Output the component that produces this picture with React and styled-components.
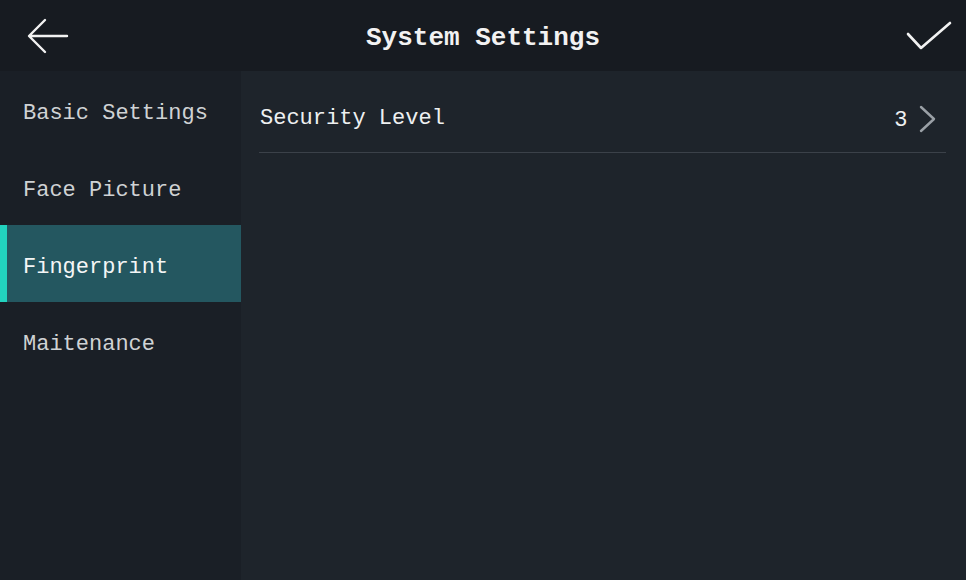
import React from 'react';
import styled, { createGlobalStyle } from 'styled-components';

const Global = createGlobalStyle`
  html, body {
    margin: 0;
    padding: 0;
    background: #1e242b;
  }
  * { box-sizing: border-box; }
`;

const Screen = styled.div`
  width: 966px;
  height: 580px;
  display: flex;
  flex-direction: column;
  background: #1e242b;
  font-family: "Liberation Mono", "DejaVu Sans Mono", monospace;
  color: #e6e8ea;
  overflow: hidden;
`;

const Header = styled.header`
  height: 71px;
  flex-shrink: 0;
  display: grid;
  grid-template-columns: 90px 1fr 90px;
  align-items: center;
  background: #171b21;
`;

const Title = styled.h1`
  margin: 0;
  padding-top: 4px;
  text-align: center;
  font-size: 26px;
  font-weight: bold;
  color: #f2f2f2;
  letter-spacing: 0;
`;

const IconButton = styled.button`
  border: 0;
  background: none;
  padding: 0;
  display: flex;
  align-items: center;
  justify-content: ${p => (p.$right ? 'flex-end' : 'flex-start')};
  padding-left: ${p => (p.$right ? '0' : '27px')};
  padding-right: ${p => (p.$right ? '14px' : '0')};
  height: 100%;
  cursor: pointer;
`;

const Body = styled.div`
  flex: 1;
  display: flex;
`;

const Sidebar = styled.nav`
  width: 241px;
  flex-shrink: 0;
  display: flex;
  flex-direction: column;
  background: #1a1f26;
`;

const NavItem = styled.div`
  height: 77px;
  display: flex;
  align-items: center;
  padding: 7px 0 0 23px;
  font-size: 22px;
  color: ${p => (p.$active ? '#f4f6f6' : '#cfd2d4')};
  background: ${p => (p.$active ? '#245760' : 'transparent')};
  box-shadow: ${p => (p.$active ? 'inset 7px 0 0 #22d3bf' : 'none')};
`;

const Content = styled.main`
  flex: 1;
  padding: 0 20px 0 18px;
`;

const Row = styled.div`
  height: 82px;
  padding: 14px 9px 0 1px;
  display: flex;
  align-items: center;
  justify-content: space-between;
  border-bottom: 1px solid #3b4149;
`;

const Label = styled.span`
  font-size: 22px;
  color: #eef0f1;
`;

const Value = styled.span`
  display: flex;
  align-items: center;
  gap: 12px;
  font-family: "Liberation Sans", Arial, sans-serif;
  font-size: 22px;
  color: #eef0f1;
`;

const BackIcon = () => (
  <svg width="42" height="36" viewBox="0 0 42 36" fill="none">
    <path d="M40 18H3M18 2L2 18l16 16" stroke="#f2f2f2" strokeWidth="2.4" strokeLinecap="round" strokeLinejoin="round" />
  </svg>
);

const CheckIcon = () => (
  <svg width="46" height="30" viewBox="0 0 46 30" fill="none">
    <path d="M2 13l13 14L44 2" stroke="#f2f2f2" strokeWidth="2.6" strokeLinecap="round" strokeLinejoin="round" />
  </svg>
);

const Chevron = () => (
  <svg width="18" height="28" viewBox="0 0 18 28" fill="none">
    <path d="M2 2l13 12L2 26" stroke="#9aa0a6" strokeWidth="2.4" strokeLinecap="round" strokeLinejoin="round" />
  </svg>
);

const items = ['Basic Settings', 'Face Picture', 'Fingerprint', 'Maitenance'];

export default function App() {
  return (
    <>
      <Global />
      <Screen>
        <Header>
          <IconButton><BackIcon /></IconButton>
          <Title>System Settings</Title>
          <IconButton $right><CheckIcon /></IconButton>
        </Header>
        <Body>
          <Sidebar>
            {items.map(item => (
              <NavItem key={item} $active={item === 'Fingerprint'}>{item}</NavItem>
            ))}
          </Sidebar>
          <Content>
            <Row>
              <Label>Security Level</Label>
              <Value>3<Chevron /></Value>
            </Row>
          </Content>
        </Body>
      </Screen>
    </>
  );
}
